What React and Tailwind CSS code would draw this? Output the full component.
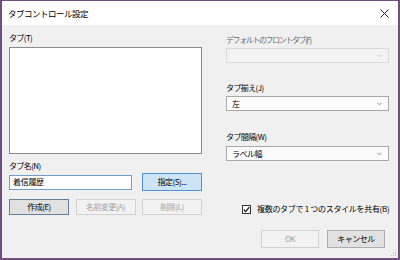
import React from "react";

const F = { fontFamily: '"Noto Sans CJK JP", "Noto Sans", sans-serif' };

function Chevron({ color = "#606060" }) {
  return (
    <svg width="5" height="4" viewBox="0 0 5 4">
      <path d="M0.5 0.8 L2.5 2.8 L4.5 0.8" fill="none" stroke={color} strokeWidth="1" />
    </svg>
  );
}

function Select({ value, disabled }) {
  return (
    <div
      className={
        "h-[15px] w-full flex items-center justify-between pl-[5px] pr-[6px] border " +
        (disabled ? "border-[#d9d9d9] bg-[#f3f3f3]" : "border-[#a9a9a9] bg-[#fbfbfb]")
      }
    >
      <span className="text-[8px] leading-[12px] tracking-[-0.5px] text-black">{value}</span>
      <Chevron color={disabled ? "#cccccc" : "#8a8a8a"} />
    </div>
  );
}

function Btn({ children, kind = "normal", w = "w-[60px]" }) {
  const cls = {
    normal: "bg-[#e1e1e1] border-[#adadad] text-black",
    focus: "bg-[#e1e1e1] border-[#60809e] text-black",
    hover: "bg-[#cde4f7] border-[#4a94d6] text-black",
    disabled: "bg-[#f2f2f2] border-[#d2d2d2] text-[#a3a3a3]",
  }[kind];
  return (
    <div className={"h-full flex items-center justify-center border text-[8px] leading-[12px] tracking-[-0.5px] " + w + " " + cls}>
      {children}
    </div>
  );
}

export default function App() {
  return (
    <div
      style={F}
      className="relative w-[400px] h-[260px] flex flex-col border-x-2 border-b-2 border-t border-[#6e4f7d] bg-[#f0f0f0] text-black"
    >
      <div className="h-[24px] bg-white flex items-center justify-between pl-[6px] pr-[9px]">
        <span className="text-[8.5px] tracking-[-0.5px] leading-[12px]">タブコントロール設定</span>
        <svg width="9" height="9" viewBox="0 0 9 9">
          <path d="M0.5 0.5 L8.5 8.5 M8.5 0.5 L0.5 8.5" stroke="#222" strokeWidth="1" />
        </svg>
      </div>
      <div className="flex-1 flex gap-[24px] pl-[7px]">
        <div className="w-[193px] flex flex-col pt-[7px]">
          <div className="h-[12px] text-[8px] leading-[12px] tracking-[-0.6px]">タブ(T)</div>
          <div className="mt-[3px] h-[107px] bg-white border border-[#8a8a8a]" />
          <div className="mt-[6px] h-[12px] text-[8px] leading-[12px] tracking-[-0.6px]">タブ名(N)</div>
          <div className="mt-[1px] h-[18px] flex items-center justify-between">
            <div className="w-[123px] h-[15px] bg-white border border-[#6f9fcf] flex items-center pl-[3px] text-[8px] leading-[12px] tracking-[-0.3px]">
              着信履歴
            </div>
            <Btn kind="hover">指定(S)...</Btn>
          </div>
          <div className="mt-[8px] h-[16px] flex justify-between">
            <Btn kind="focus">作成(E)</Btn>
            <Btn kind="disabled">名前変更(A)</Btn>
            <Btn kind="disabled">削除(L)</Btn>
          </div>
        </div>
        <div className="w-[163px] flex flex-col pt-[9px]">
          <div className="h-[12px] text-[8px] leading-[12px] tracking-[-1.4px] text-[#6d6d6d] whitespace-nowrap">デフォルトのフロントタブ(F)</div>
          <div className="mt-[2px]"><Select value="" disabled /></div>
          <div className="mt-[19px] h-[12px] text-[8px] leading-[12px] tracking-[-0.6px]">タブ揃え(J)</div>
          <div className="mt-[2px]"><Select value="左" /></div>
          <div className="mt-[20px] h-[12px] text-[8px] leading-[12px] tracking-[-0.6px]">タブ間隔(W)</div>
          <div className="mt-[3px]"><Select value="ラベル幅" /></div>
          <div className="mt-[42px] h-[12px] flex items-center pl-[16px] gap-[6px]">
            <div className="w-[9px] h-[9px] bg-white border border-[#333] flex items-center justify-center">
              <svg width="7" height="7" viewBox="0 0 7 7">
                <path d="M0.8 3.6 L2.7 5.6 L6.3 1.2" fill="none" stroke="#111" strokeWidth="1.3" />
              </svg>
            </div>
            <span className="text-[8px] leading-[12px] tracking-[-0.3px] whitespace-nowrap">複数のタブで 1 つのスタイルを共有(B)</span>
          </div>
          <div className="mt-[15px] h-[18px] flex justify-end gap-[8px] pr-[4px]">
            <Btn kind="disabled" w="w-[58px]">OK</Btn>
            <Btn kind="normal" w="w-[58px]">キャンセル</Btn>
          </div>
        </div>
      </div>
      <div className="absolute right-[2px] bottom-[2px] grid grid-cols-3 gap-[1px]">
        <span className="w-[1px] h-[1px]" />
        <span className="w-[1px] h-[1px]" />
        <span className="w-[1px] h-[1px] bg-[#b8b8b8]" />
        <span className="w-[1px] h-[1px]" />
        <span className="w-[1px] h-[1px] bg-[#b8b8b8]" />
        <span className="w-[1px] h-[1px] bg-[#b8b8b8]" />
        <span className="w-[1px] h-[1px] bg-[#b8b8b8]" />
        <span className="w-[1px] h-[1px] bg-[#b8b8b8]" />
        <span className="w-[1px] h-[1px] bg-[#b8b8b8]" />
      </div>
    </div>
  );
}
